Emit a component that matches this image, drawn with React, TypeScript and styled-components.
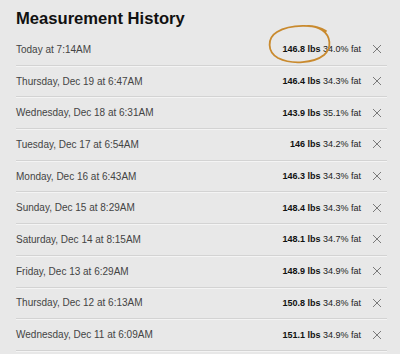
import styled, { createGlobalStyle } from 'styled-components'

const GlobalStyle = createGlobalStyle`
  html, body {
    margin: 0;
    padding: 0;
    background: #e8e8e8;
  }
  body {
    font-family: "Liberation Sans", Arial, sans-serif;
  }
`

const Page = styled.div`
  width: 400px;
  height: 354px;
  overflow: hidden;
  padding: 9px 13px 0 16px;
  box-sizing: border-box;
  background: #e8e8e8;
`

const Title = styled.h2`
  margin: 0 0 5px;
  font-size: 16.6px;
  line-height: 20px;
  font-weight: bold;
  color: #111;
`

const List = styled.div`
  display: flex;
  flex-direction: column;
`

const Row = styled.div`
  display: flex;
  align-items: center;
  height: 31.7px;
  box-sizing: border-box;
  border-bottom: 1px solid #d3d3d3;
  box-shadow: 0 1px 0 #f4f4f4;
`

const When = styled.span`
  font-size: 10px;
  color: #444;
`

const Value = styled.span`
  position: relative;
  margin-left: auto;
  font-size: 9px;
  color: #222;

  b {
    font-weight: bold;
    color: #111;
  }
`

const Circle = styled.svg`
  position: absolute;
  left: -14px;
  top: -20px;
  width: 64px;
  height: 40px;
  overflow: visible;
  pointer-events: none;
`

const Remove = styled.button`
  display: flex;
  align-items: center;
  justify-content: center;
  width: 10px;
  height: 10px;
  margin: 0 5px 0 11px;
  padding: 0;
  border: none;
  background: transparent;
  cursor: pointer;
`

const entries = [
  { when: 'Today at 7:14AM', lbs: '146.8', fat: '34.0' },
  { when: 'Thursday, Dec 19 at 6:47AM', lbs: '146.4', fat: '34.3' },
  { when: 'Wednesday, Dec 18 at 6:31AM', lbs: '143.9', fat: '35.1' },
  { when: 'Tuesday, Dec 17 at 6:54AM', lbs: '146', fat: '34.2' },
  { when: 'Monday, Dec 16 at 6:43AM', lbs: '146.3', fat: '34.3' },
  { when: 'Sunday, Dec 15 at 8:29AM', lbs: '148.4', fat: '34.3' },
  { when: 'Saturday, Dec 14 at 8:15AM', lbs: '148.1', fat: '34.7' },
  { when: 'Friday, Dec 13 at 6:29AM', lbs: '148.9', fat: '34.9' },
  { when: 'Thursday, Dec 12 at 6:13AM', lbs: '150.8', fat: '34.8' },
  { when: 'Wednesday, Dec 11 at 6:09AM', lbs: '151.1', fat: '34.9' },
]

const CloseIcon = () => (
  <svg width='10' height='10' viewBox='0 0 10 10'>
    <path d='M1 1 L9 9 M9 1 L1 9' stroke='#7a7a7a' strokeWidth='1' fill='none' />
  </svg>
)

// hand drawn highlight round the latest value
const Highlight = () => (
  <Circle viewBox='0 0 64 40'>
    <path
      d='M58 7 C48 0 22 0 9 8 C-1 14 -1 28 10 34 C24 41 46 39 56 31 C64 24 63 12 54 6 C50 3 44 2 40 2'
      stroke='#c98a2e'
      strokeWidth='1.8'
      fill='none'
      strokeLinecap='round'
    />
  </Circle>
)

export default function App() {
  return (
    <Page>
      <GlobalStyle />
      <Title>Measurement History</Title>
      <List>
        {entries.map((entry, i) => (
          <Row key={entry.when}>
            <When>{entry.when}</When>
            <Value>
              {i === 0 && <Highlight />}
              <b>{entry.lbs} lbs</b> {entry.fat}% fat
            </Value>
            <Remove aria-label='Remove'>
              <CloseIcon />
            </Remove>
          </Row>
        ))}
      </List>
    </Page>
  )
}
